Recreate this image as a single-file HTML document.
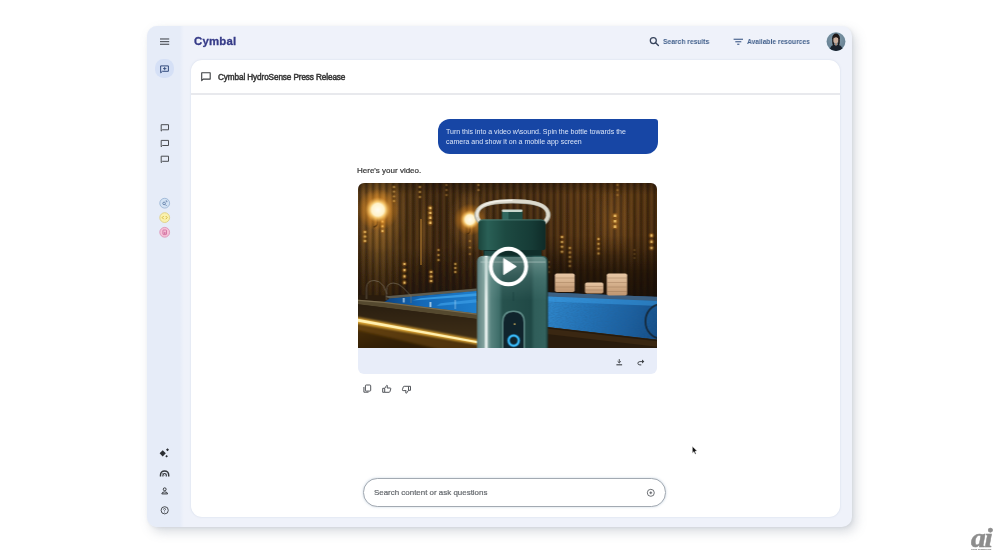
<!DOCTYPE html>
<html lang="en">
<head>
<meta charset="utf-8">
<title>Cymbal</title>
<style>
*{box-sizing:border-box;margin:0;padding:0}
html,body{width:1000px;height:558px;overflow:hidden;background:#fff}
body{position:relative;font-family:"Liberation Sans",sans-serif;color:#333}
.abs{position:absolute}
#win{left:147.4px;top:25.6px;width:704.8px;height:501px;border-radius:10px;background:#eff2fa;box-shadow:4px 5px 11px rgba(110,120,140,.26),1px 1px 3px rgba(110,120,140,.12)}
#side{left:147.4px;top:25.6px;width:36.5px;height:501px;border-radius:10px 0 0 10px;background:linear-gradient(90deg,#e6ecf8 0,#e6ecf8 88%,#eff2fa 100%)}
#panel{left:191.3px;top:60px;width:649.2px;height:456.5px;border-radius:11px;background:#fff;
 box-shadow:0 0 2px rgba(150,165,195,.35)}
#divider{left:191.3px;top:92.9px;width:649.2px;height:1.7px;background:#e8e9ed}
.t{white-space:nowrap;line-height:1;will-change:transform}
#logo{left:193.7px;top:36.3px;font-size:11.4px;font-weight:bold;color:#363b88;letter-spacing:.2px;-webkit-text-stroke:.3px #363b88}
#title{left:217.6px;top:74px;font-size:8.2px;color:#383838;-webkit-text-stroke:.5px #383838;letter-spacing:-.107px}
#sr{left:663.1px;top:37.9px;font-size:7.5px;font-weight:bold;color:#42608c;transform:scaleX(.895);transform-origin:0 0}
#ar{left:747.1px;top:37.9px;font-size:7.5px;font-weight:bold;color:#42608c;transform:scaleX(.89);transform-origin:0 0}
#activebtn{left:155px;top:58.7px;width:19.4px;height:19.8px;border-radius:8.5px;background:#d5e0f6}
#bubble{left:437.8px;top:119px;width:220px;height:34.9px;border-radius:12px 3px 12px 12px;background:#1746a5}
#btext{left:446.3px;top:127px;font-size:7.03px;line-height:9.8px;color:#d9e4f8;white-space:nowrap;will-change:transform}
#here{left:357px;top:167.3px;font-size:8px;color:#383838;-webkit-text-stroke:.22px #383838}
#card{left:357.5px;top:183px;width:299.9px;height:190.6px;border-radius:6px;background:#e8edf9;overflow:hidden}
#input{left:363.4px;top:478.2px;width:302.3px;height:28.6px;border-radius:14.3px;border:1px solid #a3aab2;background:#fff;box-shadow:0 0 2.5px rgba(120,150,180,.4)}
#ph{left:374.2px;top:488.5px;font-size:7.94px;color:#64686d;-webkit-text-stroke:.2px #64686d}
#ai{left:970.6px;top:524.5px;font-family:"Liberation Serif",serif;font-style:italic;font-weight:bold;font-size:26.5px;color:#8d8d8d;letter-spacing:-1.2px;-webkit-text-stroke:.5px #8d8d8d;transform:scaleX(1.12);transform-origin:0 0}
#aisub{left:971.2px;top:548.1px;font-size:2.35px;font-weight:bold;color:#858585;-webkit-text-stroke:.1px #858585;transform:scaleX(.86);transform-origin:0 0}
svg{position:absolute;overflow:visible}
</style>
</head>
<body>
<div id="win" class="abs"></div>
<div id="side" class="abs"></div>
<div id="panel" class="abs"></div>
<div id="divider" class="abs"></div>

<div id="logo" class="abs t">Cymbal</div>
<div id="title" class="abs t">Cymbal HydroSense Press Release</div>
<div id="sr" class="abs t">Search results</div>
<div id="ar" class="abs t">Available resources</div>

<div id="activebtn" class="abs"></div>

<div id="bubble" class="abs"></div>
<div id="btext" class="abs">Turn this into a video w\sound. Spin the bottle towards the<br>camera and show it on a mobile app screen</div>
<div id="here" class="abs t">Here's your video.</div>

<div id="card" class="abs"><svg id="vid" width="300.5" height="165" viewBox="357.5 183 300.5 165" style="left:0;top:0;overflow:hidden">
<defs>
<filter id="b1" x="-20%" y="-20%" width="140%" height="140%"><feGaussianBlur stdDeviation=".45"/></filter>
<filter id="b2" x="-20%" y="-50%" width="140%" height="200%"><feGaussianBlur stdDeviation="1.1"/></filter>
<filter id="noise" x="0" y="0" width="100%" height="100%"><feTurbulence type="fractalNoise" baseFrequency=".55 .8" numOctaves="2" seed="7" result="n"/><feColorMatrix in="n" type="matrix" values="0 0 0 0 .02  0 0 0 0 .12  0 0 0 0 .3  0 0 0 1.6 -.62"/><feComposite operator="in" in2="SourceGraphic"/></filter>
<filter id="b3" x="-5%" y="-5%" width="110%" height="110%"><feGaussianBlur stdDeviation=".42"/></filter>
<linearGradient id="wallg" x1="357.5" x2="658" y1="0" y2="0" gradientUnits="userSpaceOnUse">
<stop offset="0" stop-color="#573a18"/><stop offset=".07" stop-color="#785322"/><stop offset=".16" stop-color="#523616"/><stop offset=".26" stop-color="#422a12"/><stop offset=".37" stop-color="#4b3115"/><stop offset=".62" stop-color="#4d3115"/><stop offset=".72" stop-color="#5b3916"/><stop offset=".88" stop-color="#613d17"/><stop offset="1" stop-color="#4e3011"/>
</linearGradient>
<linearGradient id="slat" x1="0" x2="1" y1="0" y2="0">
<stop offset="0" stop-color="#120a03" stop-opacity=".38"/><stop offset=".22" stop-color="#120a03" stop-opacity=".28"/><stop offset=".42" stop-color="#2a1806" stop-opacity=".08"/><stop offset=".68" stop-color="#ffb860" stop-opacity=".07"/><stop offset=".88" stop-color="#2a1806" stop-opacity=".08"/><stop offset="1" stop-color="#120a03" stop-opacity=".38"/>
</linearGradient>
<pattern id="slats" x="358.500" y="183" width="6.700" height="165" patternUnits="userSpaceOnUse"><rect width="6.700" height="165" fill="url(#slat)"/></pattern>
<linearGradient id="wallv" x1="0" x2="0" y1="0" y2="1">
<stop offset="0" stop-color="#000" stop-opacity=".3"/><stop offset=".1" stop-color="#000" stop-opacity="0"/><stop offset=".55" stop-color="#000" stop-opacity=".08"/><stop offset=".8" stop-color="#0a0502" stop-opacity=".42"/><stop offset="1" stop-color="#0a0502" stop-opacity=".6"/>
</linearGradient>
<radialGradient id="lamp"><stop offset="0" stop-color="#fffdf0"/><stop offset=".3" stop-color="#fff2c8"/><stop offset=".4" stop-color="#ffcf70" stop-opacity=".9"/><stop offset=".6" stop-color="#f59a28" stop-opacity=".4"/><stop offset="1" stop-color="#f08a10" stop-opacity="0"/></radialGradient>
<radialGradient id="glowL"><stop offset="0" stop-color="#f0a040" stop-opacity=".42"/><stop offset="1" stop-color="#f0a040" stop-opacity="0"/></radialGradient>
<linearGradient id="water" x1="546" x2="659" y1="296" y2="338" gradientUnits="userSpaceOnUse"><stop offset="0" stop-color="#3088cc"/><stop offset=".35" stop-color="#2474b8"/><stop offset=".7" stop-color="#1c60a0"/><stop offset="1" stop-color="#154c84"/></linearGradient>
<linearGradient id="waterL" x1="0" x2="1" y1="0" y2="0"><stop offset="0" stop-color="#0c4482"/><stop offset=".4" stop-color="#1468b6"/><stop offset="1" stop-color="#1e7ecc"/></linearGradient>
<linearGradient id="face" x1="0" x2="0" y1="0" y2="1"><stop offset="0" stop-color="#2a1e10"/><stop offset="1" stop-color="#403018"/></linearGradient>
<linearGradient id="floor" x1="0" x2="1" y1="0" y2="1"><stop offset="0" stop-color="#4e320a"/><stop offset=".5" stop-color="#342006"/><stop offset="1" stop-color="#221404"/></linearGradient>
<linearGradient id="body" x1="0" x2="1" y1="0" y2="0">
<stop offset="0" stop-color="#4f7173"/><stop offset=".03" stop-color="#688a88"/><stop offset=".1" stop-color="#84a4a0"/><stop offset=".118" stop-color="#e4eeec"/><stop offset=".14" stop-color="#e4eeec"/><stop offset=".16" stop-color="#7c9e9a"/><stop offset=".2" stop-color="#56827e"/><stop offset=".31" stop-color="#3f6e6a"/><stop offset=".36" stop-color="#27524e"/><stop offset=".76" stop-color="#204946"/><stop offset=".81" stop-color="#305e5a"/><stop offset=".96" stop-color="#33625e"/><stop offset="1" stop-color="#1a3a38"/>
</linearGradient>
<linearGradient id="lid" x1="0" x2="1" y1="0" y2="0">
<stop offset="0" stop-color="#1b453d"/><stop offset=".14" stop-color="#2a6056"/><stop offset=".4" stop-color="#1d4a42"/><stop offset=".8" stop-color="#163b36"/><stop offset="1" stop-color="#0f2b28"/>
</linearGradient>
<linearGradient id="glass" x1="0" x2="0" y1="0" y2="1"><stop offset="0" stop-color="#a9c6c0" stop-opacity=".5"/><stop offset=".5" stop-color="#7fa8a2" stop-opacity=".2"/><stop offset="1" stop-color="#7fa8a2" stop-opacity="0"/></linearGradient>
<linearGradient id="shadeR" x1="0" x2="0" y1="0" y2="1"><stop offset="0" stop-color="#140c05" stop-opacity="0"/><stop offset=".6" stop-color="#140c05" stop-opacity=".5"/><stop offset="1" stop-color="#140c05" stop-opacity=".6"/></linearGradient>
<linearGradient id="towel" x1="0" x2="0" y1="0" y2="1"><stop offset="0" stop-color="#e8c8a6"/><stop offset="1" stop-color="#c09670"/></linearGradient>
</defs>
<!-- wall -->
<g filter="url(#b3)">
<rect x="355" y="181" width="306" height="170" fill="url(#wallg)"/>
<ellipse cx="377" cy="212" rx="30" ry="42" fill="url(#glowL)"/>
<ellipse cx="469" cy="222" rx="22" ry="32" fill="url(#glowL)"/>
<ellipse cx="424" cy="232" rx="10" ry="38" fill="url(#glowL)" opacity=".4"/>
<ellipse cx="612" cy="222" rx="22" ry="34" fill="url(#glowL)" opacity=".45"/>
<rect x="355" y="181" width="306" height="170" fill="url(#slats)"/>
<rect x="355" y="183" width="306" height="118" fill="url(#wallv)"/>
<rect x="419.800" y="219" width="1.400" height="46" fill="#d8963a" opacity=".6" filter="url(#b1)"/>
</g>
<g filter="url(#b3)">
<circle cx="393.5" cy="187.0" r="2.1" fill="#ff9a20" opacity="0.13"/>
<circle cx="393.5" cy="191.7" r="2.1" fill="#ff9a20" opacity="0.13"/>
<circle cx="393.5" cy="196.3" r="2.1" fill="#ff9a20" opacity="0.13"/>
<circle cx="393.5" cy="201.0" r="2.1" fill="#ff9a20" opacity="0.13"/>
<circle cx="419.4" cy="187.0" r="2.1" fill="#ff9a20" opacity="0.12"/>
<circle cx="419.4" cy="192.0" r="2.1" fill="#ff9a20" opacity="0.12"/>
<circle cx="419.4" cy="197.0" r="2.1" fill="#ff9a20" opacity="0.12"/>
<circle cx="446.0" cy="185.0" r="1.8" fill="#ff9a20" opacity="0.10"/>
<circle cx="446.0" cy="190.0" r="1.8" fill="#ff9a20" opacity="0.10"/>
<circle cx="446.0" cy="195.0" r="1.8" fill="#ff9a20" opacity="0.10"/>
<circle cx="478.0" cy="185.0" r="1.8" fill="#ff9a20" opacity="0.11"/>
<circle cx="478.0" cy="190.0" r="1.8" fill="#ff9a20" opacity="0.11"/>
<circle cx="429.8" cy="208.0" r="2.8" fill="#ff9a20" opacity="0.22"/>
<circle cx="429.8" cy="212.9" r="2.8" fill="#ff9a20" opacity="0.22"/>
<circle cx="429.8" cy="217.8" r="2.8" fill="#ff9a20" opacity="0.22"/>
<circle cx="429.8" cy="222.7" r="2.8" fill="#ff9a20" opacity="0.22"/>
<circle cx="382.0" cy="221.6" r="2.3" fill="#ff9a20" opacity="0.20"/>
<circle cx="382.0" cy="226.3" r="2.3" fill="#ff9a20" opacity="0.20"/>
<circle cx="382.0" cy="231.0" r="2.3" fill="#ff9a20" opacity="0.20"/>
<circle cx="364.5" cy="232.0" r="2.3" fill="#ff9a20" opacity="0.20"/>
<circle cx="364.5" cy="236.5" r="2.3" fill="#ff9a20" opacity="0.20"/>
<circle cx="364.5" cy="241.0" r="2.3" fill="#ff9a20" opacity="0.20"/>
<circle cx="438.0" cy="250.0" r="2.1" fill="#ff9a20" opacity="0.13"/>
<circle cx="438.0" cy="255.0" r="2.1" fill="#ff9a20" opacity="0.13"/>
<circle cx="438.0" cy="260.0" r="2.1" fill="#ff9a20" opacity="0.13"/>
<circle cx="404.0" cy="264.0" r="2.5" fill="#ff9a20" opacity="0.21"/>
<circle cx="404.0" cy="270.2" r="2.5" fill="#ff9a20" opacity="0.21"/>
<circle cx="404.0" cy="276.4" r="2.5" fill="#ff9a20" opacity="0.21"/>
<circle cx="404.0" cy="282.6" r="2.5" fill="#ff9a20" opacity="0.21"/>
<circle cx="454.8" cy="264.0" r="2.1" fill="#ff9a20" opacity="0.15"/>
<circle cx="454.8" cy="268.0" r="2.1" fill="#ff9a20" opacity="0.15"/>
<circle cx="454.8" cy="272.0" r="2.1" fill="#ff9a20" opacity="0.15"/>
<circle cx="430.6" cy="272.0" r="2.5" fill="#ff9a20" opacity="0.21"/>
<circle cx="430.6" cy="276.5" r="2.5" fill="#ff9a20" opacity="0.21"/>
<circle cx="430.6" cy="281.0" r="2.5" fill="#ff9a20" opacity="0.21"/>
<circle cx="469.4" cy="241.0" r="1.8" fill="#ff9a20" opacity="0.11"/>
<circle cx="469.4" cy="247.5" r="1.8" fill="#ff9a20" opacity="0.11"/>
<circle cx="469.4" cy="254.0" r="1.8" fill="#ff9a20" opacity="0.11"/>
<circle cx="614.5" cy="215.8" r="3.0" fill="#ff9a20" opacity="0.22"/>
<circle cx="614.5" cy="221.2" r="3.0" fill="#ff9a20" opacity="0.22"/>
<circle cx="614.5" cy="226.6" r="3.0" fill="#ff9a20" opacity="0.22"/>
<circle cx="651.0" cy="235.5" r="2.8" fill="#ff9a20" opacity="0.21"/>
<circle cx="651.0" cy="241.8" r="2.8" fill="#ff9a20" opacity="0.21"/>
<circle cx="651.0" cy="248.0" r="2.8" fill="#ff9a20" opacity="0.21"/>
<circle cx="598.0" cy="239.0" r="2.1" fill="#ff9a20" opacity="0.19"/>
<circle cx="598.0" cy="243.8" r="2.1" fill="#ff9a20" opacity="0.19"/>
<circle cx="598.0" cy="248.7" r="2.1" fill="#ff9a20" opacity="0.19"/>
<circle cx="598.0" cy="253.5" r="2.1" fill="#ff9a20" opacity="0.19"/>
<circle cx="561.5" cy="237.0" r="2.3" fill="#ff9a20" opacity="0.20"/>
<circle cx="561.5" cy="241.9" r="2.3" fill="#ff9a20" opacity="0.20"/>
<circle cx="561.5" cy="246.8" r="2.3" fill="#ff9a20" opacity="0.20"/>
<circle cx="561.5" cy="251.7" r="2.3" fill="#ff9a20" opacity="0.20"/>
<circle cx="569.4" cy="248.0" r="2.1" fill="#ff9a20" opacity="0.18"/>
<circle cx="569.4" cy="252.5" r="2.1" fill="#ff9a20" opacity="0.18"/>
<circle cx="569.4" cy="257.0" r="2.1" fill="#ff9a20" opacity="0.18"/>
<circle cx="569.4" cy="261.5" r="2.1" fill="#ff9a20" opacity="0.18"/>
<circle cx="569.4" cy="266.0" r="2.1" fill="#ff9a20" opacity="0.18"/>
<circle cx="617.0" cy="185.0" r="1.8" fill="#ff9a20" opacity="0.09"/>
<circle cx="617.0" cy="190.0" r="1.8" fill="#ff9a20" opacity="0.09"/>
<circle cx="617.0" cy="195.0" r="1.8" fill="#ff9a20" opacity="0.09"/>
<circle cx="548.5" cy="262.0" r="1.8" fill="#ff9a20" opacity="0.11"/>
<circle cx="548.5" cy="267.0" r="1.8" fill="#ff9a20" opacity="0.11"/>
<circle cx="548.5" cy="272.0" r="1.8" fill="#ff9a20" opacity="0.11"/>
<circle cx="634.0" cy="250.0" r="1.6" fill="#ff9a20" opacity="0.08"/>
<circle cx="634.0" cy="254.0" r="1.6" fill="#ff9a20" opacity="0.08"/>
<circle cx="634.0" cy="258.0" r="1.6" fill="#ff9a20" opacity="0.08"/>
<rect x="392.6" y="186.1" width="1.8" height="1.8" rx=".5" fill="#ffd070" opacity="0.51"/>
<rect x="392.6" y="190.8" width="1.8" height="1.8" rx=".5" fill="#ffd070" opacity="0.51"/>
<rect x="392.6" y="195.4" width="1.8" height="1.8" rx=".5" fill="#ffd070" opacity="0.51"/>
<rect x="392.6" y="200.1" width="1.8" height="1.8" rx=".5" fill="#ffd070" opacity="0.51"/>
<rect x="418.5" y="186.1" width="1.8" height="1.8" rx=".5" fill="#ffd070" opacity="0.47"/>
<rect x="418.5" y="191.1" width="1.8" height="1.8" rx=".5" fill="#ffd070" opacity="0.47"/>
<rect x="418.5" y="196.1" width="1.8" height="1.8" rx=".5" fill="#ffd070" opacity="0.47"/>
<rect x="445.2" y="184.2" width="1.6" height="1.6" rx=".5" fill="#ffd070" opacity="0.38"/>
<rect x="445.2" y="189.2" width="1.6" height="1.6" rx=".5" fill="#ffd070" opacity="0.38"/>
<rect x="445.2" y="194.2" width="1.6" height="1.6" rx=".5" fill="#ffd070" opacity="0.38"/>
<rect x="477.2" y="184.2" width="1.6" height="1.6" rx=".5" fill="#ffd070" opacity="0.42"/>
<rect x="477.2" y="189.2" width="1.6" height="1.6" rx=".5" fill="#ffd070" opacity="0.42"/>
<rect x="428.6" y="206.8" width="2.4" height="2.4" rx=".5" fill="#ffd070" opacity="0.85"/>
<rect x="428.6" y="211.7" width="2.4" height="2.4" rx=".5" fill="#ffd070" opacity="0.85"/>
<rect x="428.6" y="216.6" width="2.4" height="2.4" rx=".5" fill="#ffd070" opacity="0.85"/>
<rect x="428.6" y="221.5" width="2.4" height="2.4" rx=".5" fill="#ffd070" opacity="0.85"/>
<rect x="381.0" y="220.6" width="2.0" height="2.0" rx=".5" fill="#ffd070" opacity="0.77"/>
<rect x="381.0" y="225.3" width="2.0" height="2.0" rx=".5" fill="#ffd070" opacity="0.77"/>
<rect x="381.0" y="230.0" width="2.0" height="2.0" rx=".5" fill="#ffd070" opacity="0.77"/>
<rect x="363.5" y="231.0" width="2.0" height="2.0" rx=".5" fill="#ffd070" opacity="0.77"/>
<rect x="363.5" y="235.5" width="2.0" height="2.0" rx=".5" fill="#ffd070" opacity="0.77"/>
<rect x="363.5" y="240.0" width="2.0" height="2.0" rx=".5" fill="#ffd070" opacity="0.77"/>
<rect x="437.1" y="249.1" width="1.8" height="1.8" rx=".5" fill="#ffd070" opacity="0.51"/>
<rect x="437.1" y="254.1" width="1.8" height="1.8" rx=".5" fill="#ffd070" opacity="0.51"/>
<rect x="437.1" y="259.1" width="1.8" height="1.8" rx=".5" fill="#ffd070" opacity="0.51"/>
<rect x="402.9" y="262.9" width="2.2" height="2.2" rx=".5" fill="#ffd070" opacity="0.81"/>
<rect x="402.9" y="269.1" width="2.2" height="2.2" rx=".5" fill="#ffd070" opacity="0.81"/>
<rect x="402.9" y="275.3" width="2.2" height="2.2" rx=".5" fill="#ffd070" opacity="0.81"/>
<rect x="402.9" y="281.5" width="2.2" height="2.2" rx=".5" fill="#ffd070" opacity="0.81"/>
<rect x="453.9" y="263.1" width="1.8" height="1.8" rx=".5" fill="#ffd070" opacity="0.59"/>
<rect x="453.9" y="267.1" width="1.8" height="1.8" rx=".5" fill="#ffd070" opacity="0.59"/>
<rect x="453.9" y="271.1" width="1.8" height="1.8" rx=".5" fill="#ffd070" opacity="0.59"/>
<rect x="429.5" y="270.9" width="2.2" height="2.2" rx=".5" fill="#ffd070" opacity="0.81"/>
<rect x="429.5" y="275.4" width="2.2" height="2.2" rx=".5" fill="#ffd070" opacity="0.81"/>
<rect x="429.5" y="279.9" width="2.2" height="2.2" rx=".5" fill="#ffd070" opacity="0.81"/>
<rect x="468.6" y="240.2" width="1.6" height="1.6" rx=".5" fill="#ffd070" opacity="0.42"/>
<rect x="468.6" y="246.7" width="1.6" height="1.6" rx=".5" fill="#ffd070" opacity="0.42"/>
<rect x="468.6" y="253.2" width="1.6" height="1.6" rx=".5" fill="#ffd070" opacity="0.42"/>
<rect x="613.2" y="214.5" width="2.6" height="2.6" rx=".5" fill="#ffd070" opacity="0.85"/>
<rect x="613.2" y="219.9" width="2.6" height="2.6" rx=".5" fill="#ffd070" opacity="0.85"/>
<rect x="613.2" y="225.3" width="2.6" height="2.6" rx=".5" fill="#ffd070" opacity="0.85"/>
<rect x="649.8" y="234.3" width="2.4" height="2.4" rx=".5" fill="#ffd070" opacity="0.81"/>
<rect x="649.8" y="240.6" width="2.4" height="2.4" rx=".5" fill="#ffd070" opacity="0.81"/>
<rect x="649.8" y="246.8" width="2.4" height="2.4" rx=".5" fill="#ffd070" opacity="0.81"/>
<rect x="597.1" y="238.1" width="1.8" height="1.8" rx=".5" fill="#ffd070" opacity="0.72"/>
<rect x="597.1" y="242.9" width="1.8" height="1.8" rx=".5" fill="#ffd070" opacity="0.72"/>
<rect x="597.1" y="247.8" width="1.8" height="1.8" rx=".5" fill="#ffd070" opacity="0.72"/>
<rect x="597.1" y="252.6" width="1.8" height="1.8" rx=".5" fill="#ffd070" opacity="0.72"/>
<rect x="560.5" y="236.0" width="2.0" height="2.0" rx=".5" fill="#ffd070" opacity="0.77"/>
<rect x="560.5" y="240.9" width="2.0" height="2.0" rx=".5" fill="#ffd070" opacity="0.77"/>
<rect x="560.5" y="245.8" width="2.0" height="2.0" rx=".5" fill="#ffd070" opacity="0.77"/>
<rect x="560.5" y="250.7" width="2.0" height="2.0" rx=".5" fill="#ffd070" opacity="0.77"/>
<rect x="568.5" y="247.1" width="1.8" height="1.8" rx=".5" fill="#ffd070" opacity="0.68"/>
<rect x="568.5" y="251.6" width="1.8" height="1.8" rx=".5" fill="#ffd070" opacity="0.68"/>
<rect x="568.5" y="256.1" width="1.8" height="1.8" rx=".5" fill="#ffd070" opacity="0.68"/>
<rect x="568.5" y="260.6" width="1.8" height="1.8" rx=".5" fill="#ffd070" opacity="0.68"/>
<rect x="568.5" y="265.1" width="1.8" height="1.8" rx=".5" fill="#ffd070" opacity="0.68"/>
<rect x="616.2" y="184.2" width="1.6" height="1.6" rx=".5" fill="#ffd070" opacity="0.34"/>
<rect x="616.2" y="189.2" width="1.6" height="1.6" rx=".5" fill="#ffd070" opacity="0.34"/>
<rect x="616.2" y="194.2" width="1.6" height="1.6" rx=".5" fill="#ffd070" opacity="0.34"/>
<rect x="547.7" y="261.2" width="1.6" height="1.6" rx=".5" fill="#ffd070" opacity="0.42"/>
<rect x="547.7" y="266.2" width="1.6" height="1.6" rx=".5" fill="#ffd070" opacity="0.42"/>
<rect x="547.7" y="271.2" width="1.6" height="1.6" rx=".5" fill="#ffd070" opacity="0.42"/>
<rect x="633.3" y="249.3" width="1.4" height="1.4" rx=".5" fill="#ffd070" opacity="0.30"/>
<rect x="633.3" y="253.3" width="1.4" height="1.4" rx=".5" fill="#ffd070" opacity="0.30"/>
<rect x="633.3" y="257.3" width="1.4" height="1.4" rx=".5" fill="#ffd070" opacity="0.30"/>
</g>
<!-- lamps -->
<path d="M377 216 v7 q0 3 -4 4" stroke="#1a0f05" stroke-width="1.300" fill="none" opacity=".7"/>
<path d="M469.500 225 v6 q0 2 -3 3" stroke="#1a0f05" stroke-width="1.100" fill="none" opacity=".7"/>
<circle cx="377.400" cy="209.800" r="21" fill="url(#lamp)"/>
<circle cx="469.400" cy="219.600" r="16" fill="url(#lamp)"/>
<!-- right pool -->
<rect x="546" y="236" width="113" height="60" fill="url(#shadeR)"/>
<path d="M546 292.500 L659 297 L659 340 L546 327 Z" fill="url(#water)"/>
<path d="M546 292.500 L659 297 L659 340 L546 327 Z" fill="#000" filter="url(#noise)" opacity=".55"/>
<path d="M546 292.500 L659 297 L659 301 L546 296.500 Z" fill="#3d5f80" opacity=".95"/>
<path d="M546 296.500 L659 301 L659 306 L546 301.500 Z" fill="#3a9ee6" opacity=".5"/>
<path d="M546 327 L659 340 L659 350 L546 350 Z" fill="#3a2712"/>
<path d="M546 327 L659 340 L659 341.500 L546 328.500 Z" fill="#1a1208" opacity=".6"/>
<path d="M546 334 L659 347 L659 350 L546 350 Z" fill="#1e1409" opacity=".55"/>
<!-- towels -->
<g fill="url(#towel)" filter="url(#b3)">
<rect x="554.400" y="273.400" width="19.800" height="18.600" rx="1.800"/>
<rect x="584.500" y="282.600" width="18.400" height="11" rx="1.800"/>
<rect x="606.300" y="273.400" width="20.400" height="22.200" rx="1.800"/>
</g>
<g stroke="#8c6644" stroke-width=".6" opacity=".55">
<path d="M555 278h19M555 282.500h19M555 287h19M585 286.500h17.500M585 290h17.500M607 278h19.500M607 282.500h19.500M607 287h19.500M607 291.500h19.500"/>
</g>
<!-- hose ring right -->
<ellipse cx="660" cy="321.400" rx="15" ry="17" fill="none" stroke="#15222e" stroke-width="1.800" opacity=".85"/>
<!-- left pool -->
<path d="M355 295 L386 295.500 L476 288 L476 350 L355 350 Z" fill="#2a1c0d"/>
<path d="M385 296.300 L476 288.400 L476 291.300 L389 298.700 Z" fill="#5e5c50"/>
<path d="M389 298.500 L476 291 L476 314 L383.500 302.200 Z" fill="url(#waterL)"/>
<g filter="url(#b1)">
<path d="M420 298.300 L476 293.200 L476 296 L412 300.500 Z" fill="#3a9ee6" opacity=".9"/>
<path d="M440 303.300 L476 299.300 L476 302.600 L436 306 Z" fill="#3596e0" opacity=".85"/>
<rect x="402.500" y="298" width="1.600" height="4.500" fill="#cfe6f5" opacity=".8"/>
<rect x="429" y="302" width="1.800" height="5" fill="#cfe6f5" opacity=".8"/>
<rect x="454" y="300" width="1.400" height="9" fill="#9fd0f0" opacity=".5"/>
</g>
<!-- near coping -->
<path d="M355 299.600 L383.500 301.800 L476 313.600 L476 319 L355 304 Z" fill="#55492f"/>
<path d="M355 299.600 L383.500 301.800 L476 313.600 L476 314.700 L383.500 302.900 L355 300.700 Z" fill="#8a7c5c" opacity=".7"/>
<path d="M355 304 L476 319 L476 341 L355 317 Z" fill="url(#face)"/>
<path d="M355 320 L476 342 L476 350 L355 350 Z" fill="url(#floor)"/>
<g filter="url(#b2)">
<path d="M352 316.200 L480 340.300 L480 345.200 L352 323 Z" fill="#dca434"/>
<path d="M352 324 L480 346 L480 352 L450 352 L352 329 Z" fill="#a87014" opacity=".3"/>
</g>
<path d="M352 317.800 L480 341.800 L480 343.800 L352 320.800 Z" fill="#fff0b0" filter="url(#b1)"/>
<!-- ladder -->
<g fill="none" stroke="#857a68" stroke-width="1" opacity=".6" filter="url(#b3)">
<path d="M366 299 V288 Q366 280.500 374 280.500 Q379 280.500 383 286 L386.500 294"/>
<path d="M386 300 V291 Q386 283 393 283 Q398 283 403 288 L410.500 296 V303"/>
</g>
<!-- bottle -->
<path d="M481 223.500 Q473 216.500 478 209.500 Q484 201.400 512 201.400 Q540 201.400 546 209.500 Q551 216.500 543 223.500" fill="none" stroke="#a9a99d" stroke-width="4.400" stroke-linecap="round"/>
<path d="M481 223 Q473.400 216 478.300 209.200 Q484.300 201 512 201 Q539.700 201 545.700 209.200 Q550.600 216 543 223" fill="none" stroke="#dcd9cc" stroke-width="3.300" stroke-linecap="round"/>
<path d="M477.200 217 Q475.800 212.500 479 208.800 Q485 200.600 512 200.400" fill="none" stroke="#f7f5ee" stroke-width="1.100" opacity=".9"/>
<rect x="501.300" y="210.300" width="20.800" height="10" rx="2" fill="#1f4d45"/>
<rect x="501.300" y="209.600" width="20.800" height="2.300" rx="1.100" fill="#c9d8cf"/>
<rect x="502" y="212" width="6" height="8" fill="#3b756c" opacity=".7"/>
<path d="M477.800 224 Q477.800 219.400 482.500 219.400 L540.500 219.400 Q545.200 219.400 545.200 224 L545.200 247.500 Q545.200 250.300 542 250.300 L481 250.300 Q477.800 250.300 477.800 247.500 Z" fill="url(#lid)"/>
<path d="M479.500 221 Q480.500 219.900 482.500 219.900 L540.500 219.900 Q542.500 219.900 543.500 221" fill="none" stroke="#5f978c" stroke-width=".9" opacity=".75"/>
<rect x="483" y="250" width="58" height="6.500" fill="#102e2b"/>
<rect x="484" y="251" width="14" height="4.500" fill="#2a5a55" opacity=".7"/>
<path d="M476.500 262 Q476.500 255.800 483 255.800 L541 255.800 Q547.500 255.800 547.500 262 L547.500 350 L476.500 350 Z" fill="url(#body)"/>
<path d="M482 257 L541 257 Q546 257 546 262 L546 300 L482 300 Z" fill="url(#glass)"/>
<rect x="480" y="261.600" width="65" height=".9" fill="#cfe0dc" opacity=".55"/>
<rect x="512.500" y="292" width=".8" height="9" fill="#16393a" opacity=".6"/>
<!-- control panel -->
<path d="M501.500 350 V322 Q501.500 310.500 513 310.500 Q524.500 310.500 524.500 322 V350 Z" fill="#5e8a86"/>
<path d="M503 350 V322.500 Q503 312 513 312 Q523 312 523 322.500 V350 Z" fill="#10242c"/>
<circle cx="514.200" cy="324.100" r=".9" fill="#d8b860"/>
<circle cx="513.200" cy="340.600" r="5.100" fill="none" stroke="#1c86c8" stroke-width="3.600" opacity=".4"/>
<circle cx="513.200" cy="340.600" r="5.100" fill="none" stroke="#3abaf6" stroke-width="1.900"/>
<!-- play button -->
<circle cx="508" cy="266.500" r="17.700" fill="#10201f" fill-opacity=".12" stroke="#fff" stroke-width="3.900"/>
<path d="M503.200 258.600 L515.800 266.600 L503.200 274.600 Z" fill="#fff" stroke="#fff" stroke-width="1" stroke-linejoin="round"/>
</svg></div>

<div id="input" class="abs"></div>
<div id="ph" class="abs t">Search content or ask questions</div>

<svg id="icons" width="1000" height="558" viewBox="0 0 1000 558" style="left:0;top:0">
<defs>
<clipPath id="avc"><circle cx="836" cy="41.600" r="9.400"/></clipPath>
<radialGradient id="avbg" cx=".5" cy=".4" r=".7"><stop offset="0" stop-color="#86a0b0"/><stop offset="1" stop-color="#5d7688"/></radialGradient>
</defs>
<!-- hamburger -->
<g fill="#50545c"><rect x="160" y="38.400" width="9.200" height="1.150"/><rect x="160" y="41.050" width="9.200" height="1.150"/><rect x="160" y="43.700" width="9.200" height="1.150"/></g>
<!-- active new chat -->
<g fill="none" stroke="#2c4578" stroke-width=".95" stroke-linejoin="round" stroke-linecap="round">
<path d="M161 65.900 h7.400 v5.400 h-6 l-1.400 1.300 Z"/>
<path d="M164.700 67.300 v2.600 M163.400 68.600 h2.600" stroke-width=".85"/>
</g>
<!-- chat list -->
<g fill="none" stroke="#4a4d52" stroke-width="1" stroke-linejoin="round">
<path d="M161.200 124.700 h7.300 v5.100 h-6 l-1.300 1.300 Z"/>
<path d="M161.200 140.400 h7.300 v5.100 h-6 l-1.300 1.300 Z"/>
<path d="M161.200 156.200 h7.300 v5.100 h-6 l-1.300 1.300 Z"/>
</g>
<!-- title chat icon -->
<path d="M201.700 72.800 h8.500 v6.300 h-7 l-1.500 1.500 Z" fill="none" stroke="#3e4043" stroke-width="1.100" stroke-linejoin="round"/>
<!-- coloured circles -->
<circle cx="164.700" cy="203.200" r="4.900" fill="#d3e2f4" stroke="#94b0d2" stroke-width=".8"/>
<g fill="none" stroke="#4a6a98" stroke-width=".7"><circle cx="164.100" cy="203.400" r="1.300"/><path d="M165.100 204.400 l1.500 1.500 M165.600 201 l1.300 -0.100 l-.1 1.300"/></g>
<circle cx="164.700" cy="217.600" r="4.900" fill="#faf1ae" stroke="#dccb78" stroke-width=".8"/>
<path d="M163.700 216 l-1.500 1.600 l1.500 1.600 M165.700 216 l1.500 1.600 l-1.500 1.600" fill="none" stroke="#c9a820" stroke-width=".75"/>
<circle cx="164.700" cy="232.300" r="4.900" fill="#f5c2d8" stroke="#dc8cb2" stroke-width=".8"/>
<g fill="none" stroke="#c85a92" stroke-width=".7"><rect x="162.900" y="230" width="3.600" height="4.600" rx=".6"/><path d="M163.800 232.400 h1.800 M163.800 233.500 h1.800"/></g>
<!-- bottom sidebar icons -->
<g fill="#2b2e33">
<path d="M162.700 450.200 L165.800 453.300 L162.700 456.400 L159.600 453.300 Z"/>
<path d="M167.500 448.300 L169 449.800 L167.500 451.300 L166 449.800 Z"/>
<path d="M166.600 454.900 L167.900 456.200 L166.600 457.500 L165.300 456.200 Z"/>
</g>
<g fill="none" stroke="#34373c">
<path d="M160.500 476.400 v-1.400 A4.100 4.100 0 0 1 168.700 475 v1.400" stroke-width="1.450"/>
<path d="M162.900 476.400 v-1.200 A1.700 1.700 0 0 1 166.300 475.200 v1.200" stroke-width="1.150"/>
<path d="M164.600 475.600 l-2.600 -2.400" stroke-width=".7" opacity=".7"/>
</g>
<g fill="none" stroke="#34373c" stroke-width="1">
<circle cx="164.700" cy="489.300" r="1.450"/>
<path d="M161.800 493.900 q0 -2 2.900 -2 q2.900 0 2.900 2 Z" stroke-linejoin="round"/>
</g>
<circle cx="164.700" cy="510.300" r="3.600" fill="none" stroke="#3a3d42" stroke-width=".9"/>
<path d="M163.500 509.600 q0 -1.100 1 -1.100 q1 0 1 .9 q0 .6 -1 1.200 v.4" fill="none" stroke="#3a3d42" stroke-width=".75"/>
<rect x="164.100" y="511.600" width=".8" height=".8" fill="#3a3d42"/>
<!-- search icon -->
<circle cx="653.300" cy="40.500" r="3" fill="none" stroke="#37445c" stroke-width="1.250"/>
<path d="M655.600 42.800 L658.400 45.500" stroke="#37445c" stroke-width="1.350" stroke-linecap="round"/>
<!-- filter icon -->
<g fill="#3f5a88"><rect x="733.600" y="38.700" width="9.400" height="1.100"/><rect x="735.300" y="41.200" width="6" height="1.100"/><rect x="737.200" y="43.700" width="2.200" height="1.100"/></g>
<!-- avatar -->
<circle cx="836" cy="41.600" r="9.900" fill="#e6f0f8"/>
<g clip-path="url(#avc)">
<rect x="826" y="31" width="20" height="21" fill="url(#avbg)"/>
<path d="M829.500 52 Q830 45.500 833.500 45 L838.500 45 Q842.500 45.500 843 52 Z" fill="#1a212c"/>
<ellipse cx="836" cy="38.200" rx="3.900" ry="4.600" fill="#1d1716"/>
<path d="M832.300 39 Q831.800 44 833.400 46 L834.500 44 Z M839.700 39 Q840.200 44 838.600 46 L837.500 44 Z" fill="#1d1716"/>
<ellipse cx="835.800" cy="40" rx="2.500" ry="3.400" fill="#c9ad9c"/>
<path d="M833.600 38.500 Q836 35.800 838.400 38.500 L838.400 37 Q836 34.800 833.600 37 Z" fill="#1d1716"/>
<rect x="835.100" y="43" width="1.800" height="2.600" fill="#a88a78"/>
</g>
<!-- bar icons -->
<g fill="none" stroke="#3c3f44" stroke-width=".95">
<path d="M619.250 359.100 v3.600 M617.600 361.300 l1.650 1.600 l1.650 -1.600"/>
<path d="M616.400 364.800 h5.700" stroke-width="1.100"/>
<path d="M643.300 361.600 h-3.400 q-2 0 -2 1.700 q0 1.600 2 1.600 h1.400"/>
</g>
<path d="M642 359.600 L644.300 361.600 L642 363.600 Z" fill="#3c3f44"/>
<!-- copy / thumbs -->
<g fill="none" stroke="#4a4d52" stroke-width=".95" stroke-linejoin="round">
<rect x="365.400" y="385" width="5.300" height="6.100" rx=".9"/>
<path d="M363.900 387 v5.200 h4.600"/>
<path d="M382.700 388.300 h2 v4 h-2 Z M384.700 388.300 l2.100 -3 q.9 .2 .7 1.100 l-.4 1.600 h3 q.9 0 .7 .9 l-.9 2.800 q-.2 .6 -.9 .6 h-4.300"/>
<path d="M410.500 390.300 h-2 v-4 h2 Z M408.500 390.300 l-2.100 3 q-.9 -.2 -.7 -1.100 l.4 -1.600 h-3 q-.9 0 -.7 -.9 l.9 -2.800 q.2 -.6 .9 -.6 h4.300"/>
</g>
<!-- plus circle in input -->
<circle cx="650.800" cy="492.800" r="3.500" fill="none" stroke="#55585d" stroke-width=".85"/>
<path d="M650.800 491.400 v2.800 M649.400 492.800 h2.800" stroke="#55585d" stroke-width=".9"/>
<!-- cursor -->
<path d="M692.300 446.300 L692.300 453.200 L693.900 451.700 L695.100 454.300 L696.200 453.800 L695 451.300 L697.200 451.100 Z" fill="#111" stroke="#fff" stroke-width=".5"/>
</svg>

<div id="ai" class="abs t">ai</div>
<div id="aisub" class="abs t">ASAHI INTERACTIVE</div>
</body>
</html>
